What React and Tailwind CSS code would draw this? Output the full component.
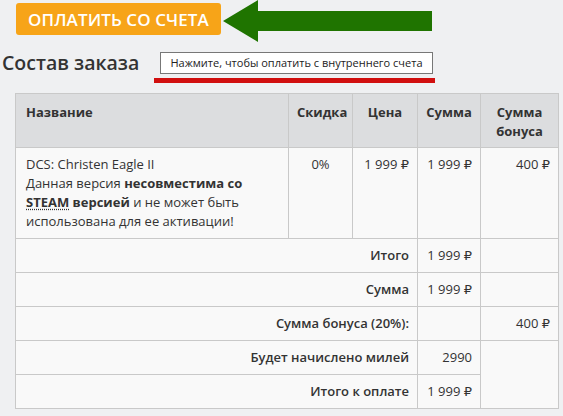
const font = { fontFamily: '"Open Sans", "DejaVu Sans", sans-serif' };

function Arrow() {
  return (
    <svg width="212" height="43" viewBox="0 0 212 43" className="block">
      <polygon
        points="1,21 36,0 36,11 210,11 210,31 36,31 36,42"
        fill="#1f7400"
      />
    </svg>
  );
}

const cell = "border border-[#c9c9c9] bg-[#f9f9f9] px-[8px] py-[7px] align-top";
const head = "border border-[#c9c9c9] bg-[#dcdddf] px-[8px] pt-[9px] pb-[6px] align-top font-bold text-center";

function TotalRow({ label, value, bonus, showBonus = true, bonusSpan = 1 }) {
  return (
    <tr>
      <td colSpan={3} className={`${cell} text-right font-semibold`}>
        {label}
      </td>
      <td className={`${cell} text-right font-medium`}>{value}</td>
      {showBonus && (
        <td rowSpan={bonusSpan} className={`${cell} text-right`}>
          {bonus}
        </td>
      )}
    </tr>
  );
}

export default function App() {
  return (
    <div
      className="w-[563px] h-[416px] overflow-hidden bg-[#eff0f2] text-[#333] text-[13px] leading-[19px]"
      style={font}
    >
      <div className="flex items-start">
        <button className="ml-[16px] mt-[3px] h-[32px] w-[205px] rounded-[3px] bg-[#f7a418] text-white text-[17px] font-semibold uppercase tracking-[0.1px]">
          Оплатить со счета
        </button>
        <div className="ml-[1px]">
          <Arrow />
        </div>
      </div>

      <div className="flex items-start mt-[8px]">
        <h2 className="ml-[2px] w-[152px] text-[19.5px] leading-[24px] font-semibold text-[#333] whitespace-nowrap">
          Состав заказа
        </h2>
        <div className="mt-[1px]">
          <div className="ml-[6px] w-[273px] h-[22px] border border-[#777] bg-white text-[11px] leading-[20px] text-[#222] text-center whitespace-nowrap">
            Нажмите, чтобы оплатить с внутреннего счета
          </div>
          <div className="mt-[4px] w-[281px] h-[5px] bg-[#d10f0f]" />
        </div>
      </div>

      <table className="ml-[15px] mt-[10px] w-[543px] border-collapse table-fixed">
        <thead>
          <tr className="h-[54px]">
            <th className={`${head} w-[273px] text-left px-[10px]`}>Название</th>
            <th className={`${head} w-[64px]`}>Скидка</th>
            <th className={`${head} w-[65px]`}>Цена</th>
            <th className={`${head} w-[63px]`}>Сумма</th>
            <th className={`${head} w-[78px]`}>
              Сумма
              <br />
              бонуса
            </th>
          </tr>
        </thead>
        <tbody>
          <tr>
            <td className={`${cell} px-[10px]`}>
              DCS: Christen Eagle II
              <br />
              Данная версия <b>несовместима со</b>
              <br />
              <b>
                <abbr className="underline decoration-dotted underline-offset-2">STEAM</abbr> версией
              </b>{" "}
              и не может быть
              <br />
              использована для ее активации!
            </td>
            <td className={`${cell} text-center`}>0%</td>
            <td className={`${cell} text-right`}>1 999 ₽</td>
            <td className={`${cell} text-right`}>1 999 ₽</td>
            <td className={`${cell} text-right`}>400 ₽</td>
          </tr>
          <TotalRow label="Итого" value="1 999 ₽" bonus="" />
          <TotalRow label="Сумма" value="1 999 ₽" bonus="" />
          <TotalRow label="Сумма бонуса (20%):" value="" bonus="400 ₽" />
          <TotalRow label="Будет начислено милей" value="2990" bonus="" bonusSpan={2} />
          <TotalRow label="Итого к оплате" value="1 999 ₽" showBonus={false} />
        </tbody>
      </table>
    </div>
  );
}
